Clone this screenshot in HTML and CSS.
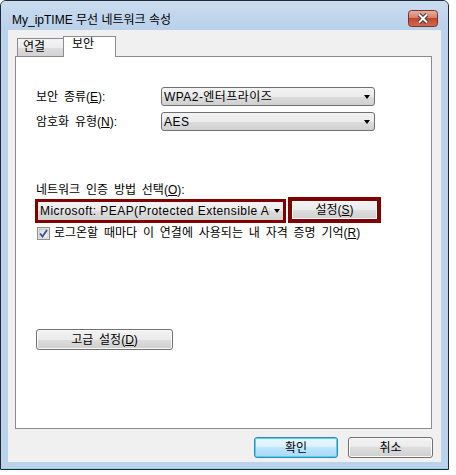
FILE: index.html
```html
<!DOCTYPE html>
<html>
<head>
    <title>My_ipTIME 무선 네트워크 속성</title>
    <link rel="stylesheet" href="styles.css">
</head>
<body>
    <div class="window">
        <div class="titlebar">
            <span class="title">My_ipTIME 무선 네트워크 속성</span>
            <div class="close">
                <svg width="30" height="17" viewBox="0 0 30 17">
                    <defs>
                        <linearGradient id="cg" x1="0" y1="0" x2="0" y2="1">
                            <stop offset="0" stop-color="#eab2a4"/>
                            <stop offset="0.45" stop-color="#d5806c"/>
                            <stop offset="0.5" stop-color="#c2462e"/>
                            <stop offset="1" stop-color="#d56a50"/>
                        </linearGradient>
                    </defs>
                    <rect x="0.5" y="0.5" width="29" height="16" rx="3" fill="url(#cg)" stroke="#7a3426"/>
                    <path d="M11 4.5 L19 12.5 M19 4.5 L11 12.5" stroke="#4a3a36" stroke-width="4"/>
                    <path d="M11 4.5 L19 12.5 M19 4.5 L11 12.5" stroke="#fff" stroke-width="2"/>
                </svg>
            </div>
        </div>

        <div class="client">
            <div class="tabs">
                <div class="tab">연결</div>
                <div class="tab active">보안</div>
            </div>

            <div class="panel">
                <div class="field">
                    <label>보안 종류(<u>E</u>):</label>
                    <div class="select"><span class="val">WPA2-엔터프라이즈</span><span class="arrow"></span></div>
                </div>
                <div class="field">
                    <label>암호화 유형(<u>N</u>):</label>
                    <div class="select"><span class="val">AES</span><span class="arrow"></span></div>
                </div>

                <div class="auth-label">네트워크 인증 방법 선택(<u>O</u>):</div>
                <div class="auth-row">
                    <div class="hl-select">
                        <div class="select flat"><span class="val">Microsoft: PEAP(Protected Extensible Authentication Protocol)</span><span class="arrow"></span></div>
                    </div>
                    <div class="hl-btn">
                        <button class="btn fill">설정(<u>S</u>)</button>
                    </div>
                </div>

                <div class="check-row">
                    <span class="check">
                        <svg width="13" height="13" viewBox="0 0 13 13">
                            <defs>
                                <linearGradient id="kg" x1="0" y1="0" x2="1" y2="1">
                                    <stop offset="0" stop-color="#d6d6d6"/>
                                    <stop offset="1" stop-color="#fbfbfb"/>
                                </linearGradient>
                            </defs>
                            <rect x="0.5" y="0.5" width="12" height="12" fill="#f4f4f4" stroke="#8e8f8f"/>
                            <rect x="2" y="2" width="9" height="9" fill="url(#kg)" stroke="#b0b0b0" stroke-width="0.6"/>
                            <path d="M3 6.5 L5.5 9.5 L10 3" fill="none" stroke="#3b4f94" stroke-width="1.8"/>
                        </svg>
                    </span>
                    <span>로그온할 때마다 이 연결에 사용되는 내 자격 증명 기억(<u>R</u>)</span>
                </div>

                <button class="btn advanced">고급 설정(<u>D</u>)</button>
            </div>

            <div class="footer">
                <button class="btn default ok">확인</button>
                <button class="btn cancel">취소</button>
            </div>
        </div>
    </div>
</body>
</html>
```

FILE: styles.css
```css
body { margin: 0; background: #fff; font-family: "Liberation Sans", "Noto Sans CJK KR", sans-serif; font-size: 12px; color: #000; word-spacing: 2.5px; }
u { text-decoration: underline; text-underline-offset: 1px; }

.window { width: 449px; height: 470px; box-sizing: border-box; border: 1px solid #1f2a36; border-radius: 6px 6px 0 0; background: #bad2ea; box-shadow: inset 0 -1px 0 #8fd3ea; }
.titlebar { height: 29px; display: flex; align-items: flex-start; padding: 0 10px 0 11px; background: linear-gradient(#cbdcef, #b9d1ea); border-radius: 5px 5px 0 0; }
.title { flex: 1; margin-top: 12px; font-size: 12px; line-height: 14px; color: #000; word-spacing: 0; }
.close { margin-top: 9px; height: 17px; }
.close svg { display: block; }

.client { margin: 0 7px; height: 432px; box-sizing: border-box; padding: 6px 9px 0 7px; background: #f0f0f0; }

.tabs { display: flex; align-items: flex-end; height: 20px; padding-left: 2px; position: relative; z-index: 1; }
.tab { height: 18px; width: 46px; box-sizing: border-box; border: 1px solid #898c95; border-bottom: none; border-right: none; padding-left: 5px; line-height: 16px; background: linear-gradient(#f4f4f4 0%, #ececec 50%, #dedede 50%, #d2d2d2 100%); }
.tab.active { height: 21px; width: 53px; margin-bottom: -1px; border-right: 1px solid #898c95; padding-left: 8px; line-height: 15px; background: #fff; }

.panel { height: 373px; box-sizing: border-box; border: 1px solid #898c95; background: #fff; padding: 0 20px; }

.field { display: flex; align-items: center; height: 19px; }
.field:first-child { margin-top: 30px; }
.field + .field { margin-top: 6px; }
.field label { width: 125px; line-height: 14px; }

.select { width: 214px; height: 19px; box-sizing: border-box; border: 1px solid #707070; border-radius: 3px; padding-left: 2px; display: flex; align-items: center; line-height: 14px; background: linear-gradient(#f3f3f3 0%, #ebebeb 50%, #dddddd 50%, #d0d0d0 100%); }
.select .val { letter-spacing: 0.45px; word-spacing: 0; }
.arrow { margin-left: auto; margin-right: 4px; width: 0; height: 0; border-left: 3.5px solid transparent; border-right: 3.5px solid transparent; border-top: 4px solid #000; flex: none; }

.auth-label { margin-top: 52px; line-height: 14px; }
.auth-row { display: flex; align-items: flex-end; gap: 2px; margin-left: -1px; }
.hl-select { width: 251px; height: 24px; box-sizing: border-box; border: 3px solid #800000; }
.select.flat { width: 100%; height: 100%; border: none; border-radius: 0; padding-left: 2px; }
.select.flat .val { white-space: nowrap; overflow: hidden; flex: 1; min-width: 0; }
.select.flat .arrow { margin-left: 4px; margin-right: 3px; }
.hl-btn { width: 93px; height: 26px; box-sizing: border-box; border: 4px solid #800000; }

.btn { font: inherit; word-spacing: inherit; color: #000; line-height: 14px; padding: 0; border: 1px solid #707070; border-radius: 3px; box-shadow: inset 0 0 0 1px #fbfbfb; background: linear-gradient(#f2f2f2 0%, #ebebeb 50%, #dddddd 50%, #cfcfcf 100%); cursor: pointer; }
.btn.fill { width: 100%; height: 100%; display: block; border-radius: 0; border: none; }
.btn.advanced { display: block; width: 137px; height: 21px; margin-top: 89px; }
.btn.default { border-color: #3c7fb1; box-shadow: inset 0 0 0 1px #48d8fb; background: linear-gradient(#eaf6fd 0%, #d9f0fc 50%, #bee6fd 50%, #a7d9f5 100%); }

.check-row { display: flex; align-items: center; height: 13px; margin-top: 4px; margin-left: 1px; gap: 4px; line-height: 13px; }
.check { width: 13px; height: 13px; flex: none; }
.check svg { display: block; }

.footer { display: flex; justify-content: flex-end; gap: 10px; margin-top: 8px; margin-right: -1px; }
.footer .btn { height: 21px; }
.footer .ok { width: 84px; }
.footer .cancel { width: 85px; }
```
